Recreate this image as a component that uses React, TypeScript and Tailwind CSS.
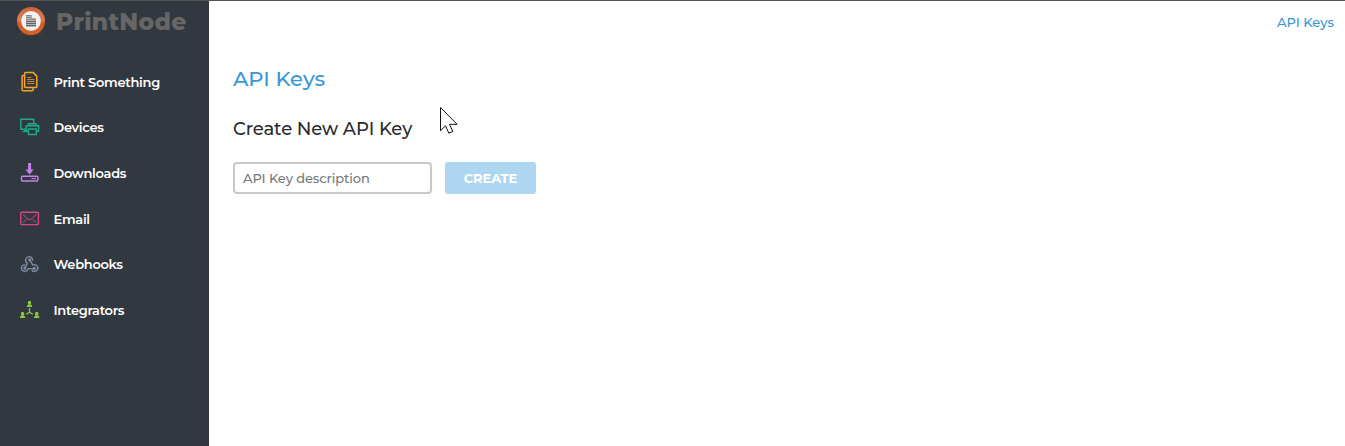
import type { ReactNode } from 'react';

function PrintIcon() {
  return (
    <svg width="20" height="22" viewBox="0 0 20 22" fill="none" stroke="#f5a42a" strokeWidth="1.5" strokeLinejoin="round">
      <path d="M5.6 1.6h7.7l3.5 3.5v10.4q0 1-1 1H5.6q-1 0-1-1V2.6q0-1 1-1z" />
      <path d="M4.4 4.5H3.1q-1 0-1 1v13.3q0 1 1 1h9q1 0 1-1v-1.8" />
      <path d="M7.3 6.5h4M7.3 8.5h7M7.3 10.5h7M7.3 12.5h7" strokeWidth="1" opacity="0.75" />
    </svg>
  );
}

function DevicesIcon() {
  return (
    <svg width="20" height="20" viewBox="0 0 20 20" fill="none" stroke="#1fab89" strokeWidth="1.4">
      <path d="M13.7 6V2.2H.8v10h5M2.5 14.6h4.5M5 12.2v2.4" />
      <path d="M8.5 9V6.8h7.5V9M8.5 14.3H6.3V8.8h12.3v5.5h-2.3" />
      <path d="M8.5 12h7.8v5.5H8.5z" />
    </svg>
  );
}

function DownloadsIcon() {
  return (
    <svg width="20" height="22" viewBox="0 0 20 22" fill="none" stroke="#c681e8" strokeWidth="1.4">
      <path d="M8.1 1h3v6.5h2.6L9.6 12.5 5.5 7.5h2.6z" fill="#c681e8" stroke="none" />
      <rect x="1.5" y="14.2" width="16.4" height="4.8" rx="1" />
      <path d="M11.5 16.6h4.5" strokeWidth="1.1" />
    </svg>
  );
}

function EmailIcon() {
  return (
    <svg width="20" height="20" viewBox="0 0 20 20" fill="none" stroke="#d9477f" strokeWidth="1.4">
      <rect x="0.8" y="3.2" width="17.6" height="12.4" rx="0.8" />
      <path d="m3 5.6 5 4.4q1.6 1.3 3.2 0l5.1-4.4M3 13.6l3.5-3M16.3 13.6l-3.5-3" strokeWidth="1" />
    </svg>
  );
}

function WebhooksIcon() {
  return (
    <svg width="20" height="20" viewBox="0 0 20 20" fill="none" stroke="#7f8a9e" strokeWidth="1.4">
      <path d="M7.2 9.1A3.5 3.5 0 1 1 12.6 6.6M5.2 10.9A3.3 3.3 0 1 0 8 14.6h5.2M12.6 11.4a3.3 3.3 0 1 1-.8 4.6" />
      <path d="M7.4 9 5 13.8M10 6l3 5.4" strokeWidth="1.5" />
      <circle cx="9.6" cy="5.8" r="0.9" />
      <circle cx="4.8" cy="14.3" r="0.9" />
      <circle cx="14.4" cy="14.4" r="0.9" />
    </svg>
  );
}

function Person() {
  return (
    <>
      <rect x="-1.6" y="0" width="3.2" height="3.7" rx="1" />
      <path d="M-2.6 6V4.4l1.6-.9h2l1.6.9V6z" />
    </>
  );
}

function IntegratorsIcon() {
  return (
    <svg width="20" height="20" viewBox="0 0 20 20" fill="#8cc63f">
      <g transform="translate(9.5 1)"><Person /></g>
      <g transform="translate(2.6 12)"><Person /></g>
      <g transform="translate(16.7 12)"><Person /></g>
      <path d="M9.5 8v4.4M9.5 12.2l-3.4 2M9.5 12.2l3.4 2" stroke="#8cc63f" strokeWidth="1.3" />
    </svg>
  );
}

function Logo() {
  return (
    <svg width="30" height="32" viewBox="0 0 30 32">
      <defs>
        <linearGradient id="ring" x1="0" y1="0" x2="0" y2="1">
          <stop offset="0" stopColor="#cb6334" />
          <stop offset="0.45" stopColor="#d98058" />
          <stop offset="0.6" stopColor="#d05c22" />
          <stop offset="1" stopColor="#d8642a" />
        </linearGradient>
      </defs>
      <ellipse cx="15" cy="27.5" rx="12" ry="2.8" fill="#5a3a32" opacity="0.5" />
      <circle cx="15" cy="15" r="14" fill="url(#ring)" />
      <circle cx="15" cy="15" r="9.9" fill="#f1f1f1" />
      <path d="M10 9h6v3h4v9H10z" fill="#b5b5b5" />
      <path d="M10 9.5h5M10 11.5h5.5M10 13.5h10" stroke="#8a8a8a" strokeWidth="1" />
      <path d="M10 15.5h10M10 17.5h10M10 19.5h10" stroke="#666" strokeWidth="1" />
    </svg>
  );
}

function NavItem({ icon, label }: { icon: ReactNode; label: string }) {
  return (
    <a className="flex h-[45.6px] items-center pl-5">
      <span className="flex w-5 shrink-0 justify-center">{icon}</span>
      <span className="ml-[13.5px] whitespace-nowrap text-[13px] leading-5 font-semibold tracking-[-0.3px] text-white">{label}</span>
    </a>
  );
}

export default function App() {
  return (
    <div className="relative flex h-[446px] w-full overflow-hidden border-t border-[#555] bg-white font-['Montserrat','Inter',sans-serif]">
      <aside className="w-[209px] shrink-0 bg-[#32383f]">
        <div className="flex h-[58px] items-start pl-4 pt-[5px]">
          <Logo />
          <span className="ml-[10px] whitespace-nowrap text-[23.5px] leading-8 font-extrabold tracking-[0.3px] text-[#666]">PrintNode</span>
        </div>
        <nav>
          <NavItem icon={<PrintIcon />} label="Print Something" />
          <NavItem icon={<DevicesIcon />} label="Devices" />
          <NavItem icon={<DownloadsIcon />} label="Downloads" />
          <NavItem icon={<EmailIcon />} label="Email" />
          <NavItem icon={<WebhooksIcon />} label="Webhooks" />
          <NavItem icon={<IntegratorsIcon />} label="Integrators" />
        </nav>
      </aside>
      <main className="flex-1 pl-6">
        <div className="flex h-[42px] items-center justify-end pr-[11px]">
          <a className="text-[13px] leading-5 font-medium text-[#3a96d8]">API Keys</a>
        </div>
        <h1 className="mt-5 text-[21px] leading-8 font-medium text-[#3a96d8]">API Keys</h1>
        <h2 className="mt-[22px] text-[18px] leading-6 font-medium tracking-[-0.1px] text-[#2b2b2b]">Create New API Key</h2>
        <form className="mt-[21px] flex gap-[13px]">
          <input placeholder="API Key description" className="h-8 w-[199px] rounded border-2 border-[#c8c8c8] bg-white px-2 text-[13px] font-medium tracking-[-0.1px] text-[#333] placeholder:text-[#777] outline-none" />
          <button type="button" className="h-8 w-[91px] rounded-[3px] bg-[#aed6f0] pt-0.5 text-[13px] font-bold tracking-[-0.1px] text-white">CREATE</button>
        </form>
      </main>
      <svg className="absolute left-[440px] top-[106px]" width="19" height="28" viewBox="0 0 19 28">
        <path d="M.5.5v23.2l5-4.9 3.3 7.4 4-1.7-3.3-7.2h7.6z" fill="#fff" stroke="#111" strokeWidth="1" />
      </svg>
    </div>
  );
}
